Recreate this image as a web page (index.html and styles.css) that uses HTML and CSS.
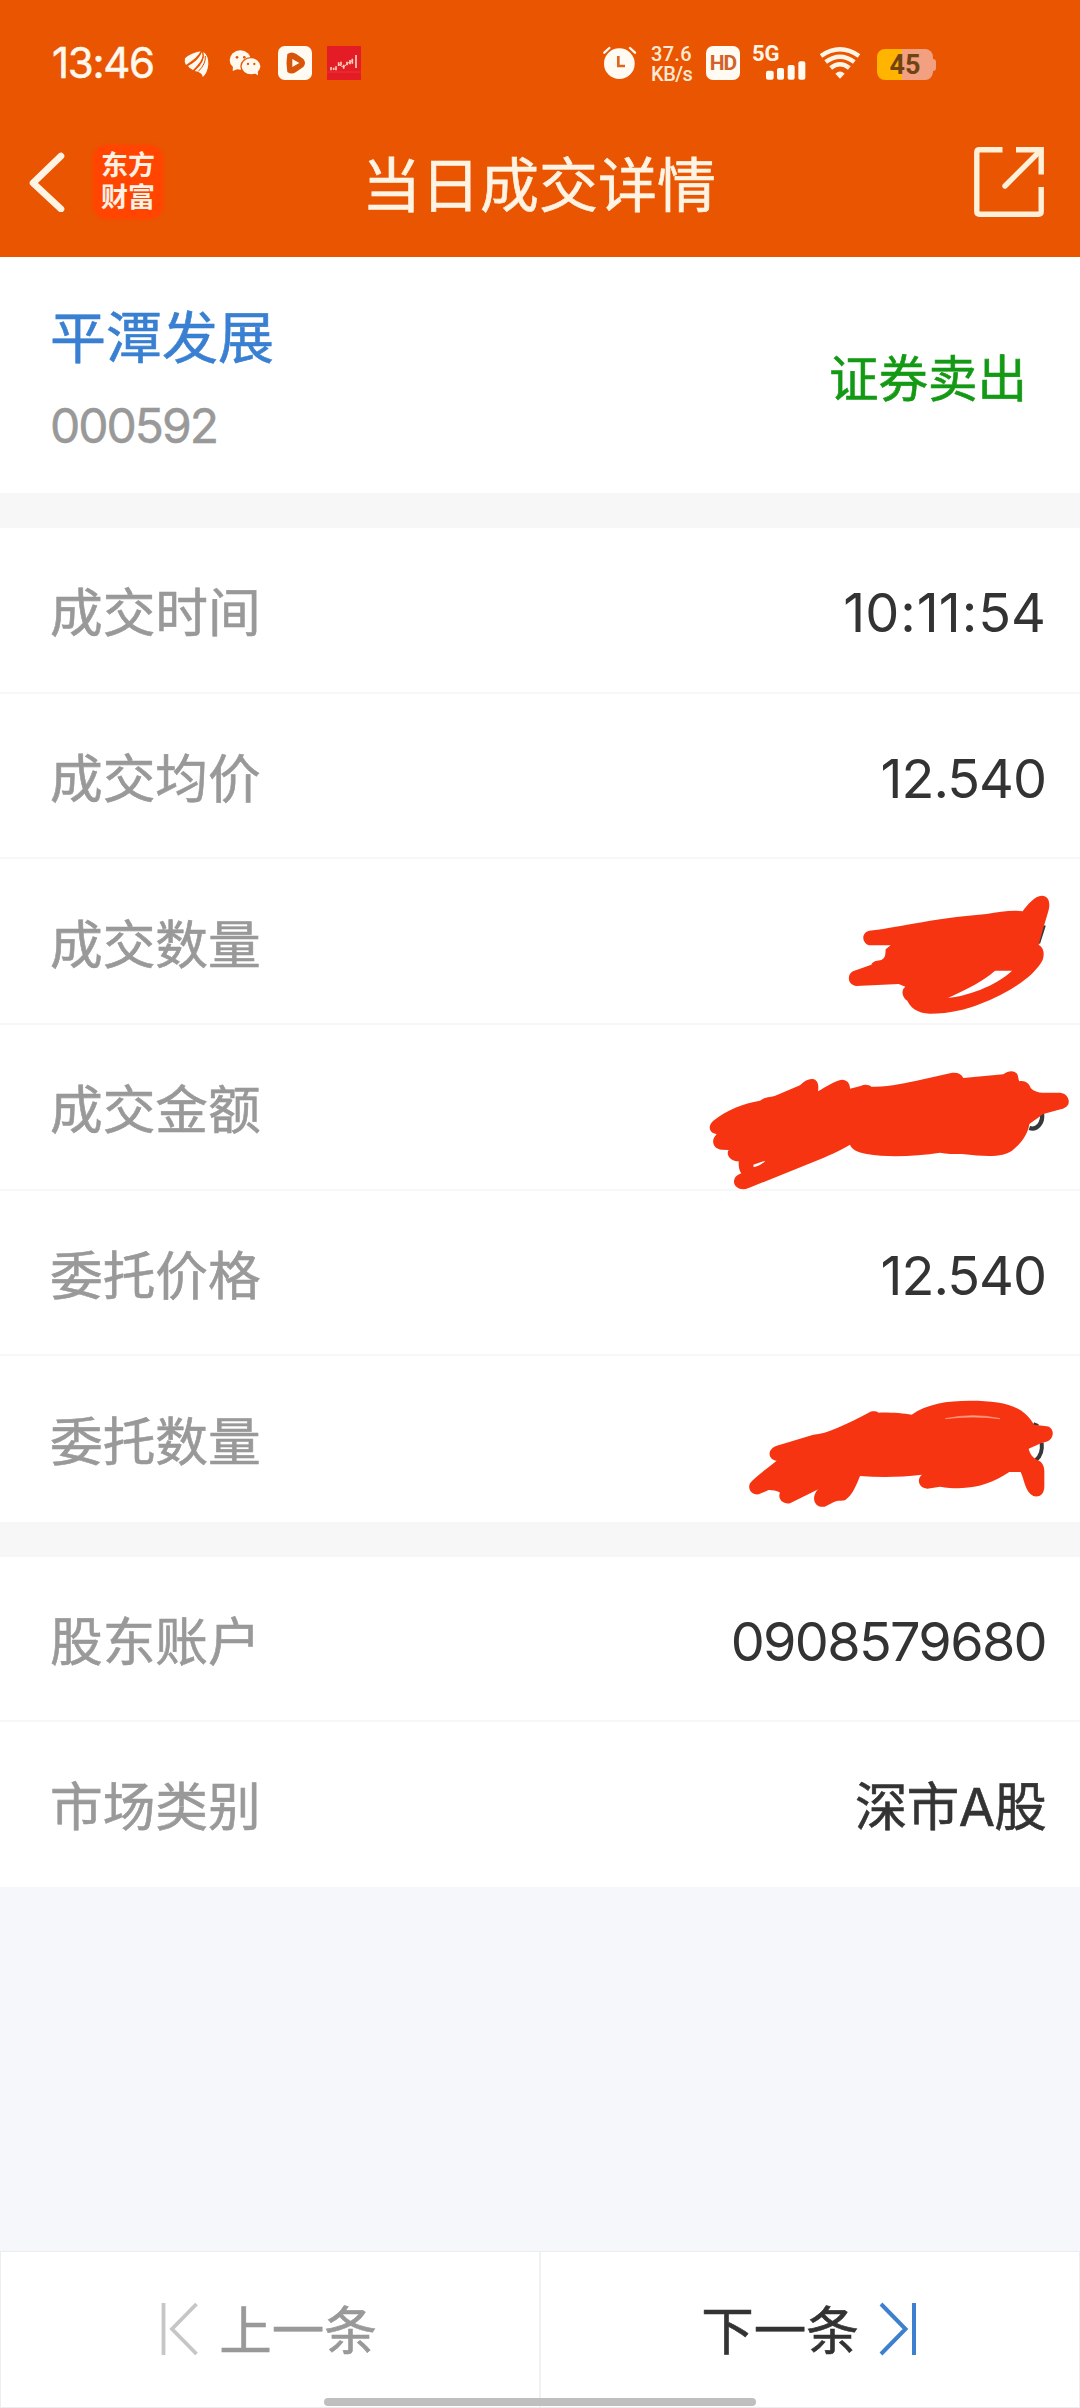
FILE: index.html
```
<!DOCTYPE html>
<html lang="zh-CN">
<head>
<meta charset="utf-8">
<title>当日成交详情</title>
<link rel="stylesheet" href="styles.css">
</head>
<body>
<header class="top">
  <div class="status">
    <div class="status-left">
      <span class="clock">13<i>:</i>46</span>
      <svg class="i-wing" width="26" height="28" viewBox="0 0 78 84" fill="#fff8ee"><path d="M3 25Q22 8 50 4Q42 22 6 45Q0 36 3 25Z"/><path d="M12 48Q44 31 54 5Q66 22 27 60Q16 56 12 48Z"/><path d="M32 63Q66 34 58 5Q74 17 73 42Q71 70 56 81Q55 67 32 63Z"/><path d="M9 46Q45 28 52 5M29 61Q64 32 56 5M43 64Q66 42 64 18" fill="none" stroke="#e95500" stroke-width="3"/></svg>
      <svg class="i-chat" width="32" height="28" viewBox="0 0 96 84"><g fill="#fff8ee"><ellipse cx="34" cy="33" rx="32" ry="29"/><path d="M12 50L11 66L32 58Z"/></g><ellipse cx="66" cy="52" rx="32" ry="28" fill="#e95500"/><g fill="#fff8ee"><ellipse cx="66" cy="52" rx="28" ry="24"/><path d="M72 70L87 79L86 64Z"/></g><g fill="#e95500"><circle cx="24" cy="25" r="4"/><circle cx="46" cy="25" r="4"/><circle cx="57" cy="45" r="3.5"/><circle cx="76" cy="45" r="3.5"/></g></svg>
      <svg class="i-play" width="34" height="34" viewBox="0 0 102 102"><rect width="102" height="102" rx="20" fill="#fffaf2"/><path d="M28 24Q41 15 55 24L76 39Q86 51 76 63L54 78Q41 87 28 78Q23 51 28 24Z" fill="#d85409"/><path d="M43 39L64 51L43 63Z" fill="#fffaf2"/></svg>
      <svg class="i-chart" width="34" height="34" viewBox="0 0 102 102"><rect width="102" height="102" fill="#e41c25"/><path d="M0 78H102" stroke="#f1443d" stroke-width="2"/><path d="M12 63V73M20 65V72M27 61V73M35 49V60M42 47V57M50 56V68M60 47V58M69 42V55M76 38V53M87 27V66" stroke="#ffd0bd" stroke-width="5"/><path d="M35 55L50 64L60 53L76 44" fill="none" stroke="#ffd0bd" stroke-width="3"/></svg>
    </div>
    <div class="status-right">
      <svg class="i-alarm" width="34" height="36" viewBox="0 0 102 108"><circle cx="49" cy="56" r="46" fill="#fffaf2"/><path d="M4 23L19 9M81 9L96 23" stroke="#fffaf2" stroke-width="7" stroke-linecap="round"/><path d="M46 33V63H66" fill="none" stroke="#dc6820" stroke-width="8"/></svg>
      <span class="speed"><b>37.6</b><b>KB/s</b></span>
      <span class="hd">HD</span>
      <span class="signal"><b>5G</b><svg width="40" height="20" viewBox="0 0 120 60" fill="#fffaf2"><rect y="32" width="23" height="27" rx="6"/><rect x="33" y="24" width="21" height="35" rx="6"/><rect x="65" y="15" width="21" height="44" rx="6"/><rect x="97" y="4" width="21" height="55" rx="6"/></svg></span>
      <svg class="i-wifi" width="40" height="32" viewBox="0 0 120 96" fill="none" stroke="#fff4e6" stroke-width="13"><path d="M3 27Q60 -13 117 27"/><path d="M17 45Q60 13 103 45"/><path d="M32 63Q60 40 88 63"/><path d="M46 80Q60 67 74 80L60 95Z" fill="#fff4e6" stroke="none"/></svg>
      <span class="battery"><i class="cell">45</i><i class="cap"></i></span>
    </div>
  </div>
  <nav class="bar">
    <div class="bar-left">
      <svg width="36" height="60" viewBox="0 0 36 60" fill="none" stroke="#fff4e4" stroke-width="6.6" stroke-linecap="round" stroke-linejoin="round"><path d="M32 4L4 31L32 57"/></svg>
      <span class="logo"><span>东方</span><span>财富</span></span>
    </div>
    <h1>当日成交详情</h1>
    <svg class="share" width="70" height="70" viewBox="0 0 70 70" fill="none" stroke="#fff0da" stroke-width="5.4"><path d="M28.5 2.8H5.5Q2.8 2.8 2.8 5.5V64.5Q2.8 67.2 5.5 67.2H64.5Q67.2 67.2 67.2 64.5V40M42 2.8H67.2V27.5"/><path d="M66 4L31 39" stroke-linecap="round"/></svg>
  </nav>
</header>

<section class="stock">
  <div class="stock-id">
    <span class="name">平潭发展</span>
    <span class="code">000592</span>
  </div>
  <span class="side">证券卖出</span>
</section>

<section class="rows deal">
  <div class="row"><span class="label">成交时间</span><span class="value time">10<i>:</i>11<i>:</i>54</span></div>
  <div class="row"><span class="label">成交均价</span><span class="value">12.540</span></div>
  <div class="row"><span class="label">成交数量</span>
    <svg class="scribble s1" viewBox="0 0 900 510"><path d="M793 166L776 220" stroke="#35393c" stroke-width="9"/><path fill-rule="evenodd" d="M268 182C330 178 450 145 620 132C660 125 700 119 728 124C742 104 766 76 786 77C804 78 812 94 806 120L790 174L776 224C792 234 794 250 788 270C762 320 690 366 600 402C560 418 510 431 450 431C410 430 390 410 382 392C366 383 362 360 376 350L356 342L228 348C200 342 202 312 219 304L274 284C280 272 294 272 304 270C318 264 316 250 317 238L332 226H266C244 216 244 188 268 182ZM504 384C560 378 645 350 696 302H645C612 332 560 358 504 384Z" fill="#f63411"/></svg></div>
  <div class="row"><span class="label">成交金额</span>
    <svg class="scribble s2" viewBox="0 0 1170 480"><path d="M1056 190C1060 220 1040 242 1018 234" fill="none" stroke="#35393c" stroke-width="13"/><path fill-rule="evenodd" d="M70 212C110 180 160 160 210 152C222 142 238 142 254 138L330 106C346 90 360 84 372 88C386 94 386 110 384 124C410 108 436 92 456 89C474 90 480 102 480 116L512 108C524 102 536 104 544 110C600 112 640 100 700 88L780 70C800 66 812 70 820 84L940 73C954 62 970 60 980 70C986 78 984 88 988 94C1004 90 1018 100 1022 114C1032 124 1044 128 1058 128H1110C1130 130 1138 146 1136 158C1134 170 1124 174 1112 178L1060 192L1018 222C1014 252 994 280 966 302C940 320 900 322 815 312C790 312 770 312 750 308C680 318 600 324 530 312C500 306 486 298 480 284C450 302 410 320 370 336L176 414C154 424 130 412 132 392C136 376 146 374 154 370C146 360 146 346 146 334C124 334 106 316 116 300L96 299C70 298 64 274 74 260L80 252C60 250 50 230 70 212ZM190 344L226 332C216 344 202 350 191 352Z" fill="#f63411"/></svg></div>
  <div class="row"><span class="label">委托价格</span><span class="value">12.540</span></div>
  <div class="row"><span class="label">委托数量</span>
    <svg class="scribble s3" viewBox="0 0 1080 480"><path d="M940 132L954 138M965 188C968 212 962 228 948 240" fill="none" stroke="#35393c" stroke-width="12"/><path d="M168 198L280 164C320 162 380 132 446 98C456 92 468 93 476 98C510 97 550 100 575 104C620 72 680 62 750 62C850 62 910 76 942 134L974 138C992 138 1000 150 998 164C994 182 980 186 966 188L926 206C930 222 936 230 952 240C968 246 974 260 973 280V320C972 346 956 352 940 348C914 334 914 300 902 276H868C810 314 750 334 660 320L622 326C594 324 590 296 606 284C540 292 480 292 420 288C408 318 398 344 376 360C364 364 354 360 342 366L314 380C286 384 278 360 284 344C288 334 292 328 298 326L210 370C188 374 172 356 180 338C168 330 156 332 146 330L116 343C94 346 82 326 90 310C104 292 138 268 170 242C142 238 142 208 168 198Z" fill="#f63411"/><path d="M676 116Q760 98 840 116Q760 106 676 116Z" fill="#ff9f83" stroke="#ff9f83" stroke-width="2"/></svg></div>
</section>

<section class="rows account">
  <div class="row"><span class="label">股东账户</span><span class="value number">0908579680</span></div>
  <div class="row"><span class="label">市场类别</span><span class="value market">深市A股</span></div>
</section>

<footer class="pager">
  <div class="page prev"><svg width="38" height="54" viewBox="0 0 38 54" fill="none" stroke="#c6c6c6" stroke-width="3.8"><path d="M2.5 1V53M35.5 2L11 27L35.5 52"/></svg><span>上一条</span></div>
  <div class="page next"><span>下一条</span><svg width="38" height="54" viewBox="0 0 38 54" fill="none" stroke="#3c80cf" stroke-width="4"><path d="M35 1V53M2 2L26.5 27L2 52"/></svg></div>
  <i class="home"></i>
</footer>
</body>
</html>
```
FILE: styles.css
```
* { box-sizing: border-box; }
body {
  margin: 0;
  width: 1080px;
  height: 2408px;
  display: flex;
  flex-direction: column;
  overflow: hidden;
  background: #f5f7fa;
  font-family: Inter, "Noto Sans CJK SC", sans-serif;
  color: #333;
}
svg { display: block; flex: none; }
i { font-style: normal; }
h1, .name, .side, .label, .market, .page span { -webkit-text-stroke: .6px currentColor; }

.top { height: 257px; background: #e95500; flex: none; }
.status {
  height: 128px;
  padding: 0 144px 0 52px;
  display: flex;
  justify-content: space-between;
}
.status-left, .status-right { display: flex; align-items: flex-start; }
.clock { width: 103px; font-size: 42px; line-height: 50px; margin-top: 38px; letter-spacing: -1.3px; color: #fff8ee; white-space: nowrap; -webkit-text-stroke: .5px currentColor; }
.i-wing { margin: 50px 0 0 29px; }
.i-chat { margin: 49px 0 0 19px; }
.i-play { margin: 46px 0 0 17px; }
.i-chart { margin: 46px 0 0 15px; }
.i-alarm { margin-top: 45px; }
.speed {
  width: 40px;
  margin: 44px 0 0 14px;
  display: flex;
  flex-direction: column;
  font-family: Roboto, sans-serif;
  font-size: 20px;
  line-height: 20px;
  letter-spacing: -.5px;
  color: #ffe9d3;
}
.speed b { font-weight: 500; white-space: nowrap; }
.speed b:first-child { letter-spacing: .3px; }
.hd {
  width: 34px;
  height: 34px;
  margin: 46px 0 0 15px;
  border-radius: 7px;
  background: #fffaf2;
  color: #d2612a;
  font: 700 21px/34px Roboto, sans-serif;
  letter-spacing: -1px;
  text-align: center;
}
.signal { width: 54px; margin: 44px 0 0 12px; display: flex; flex-direction: column; }
.signal b { font: 700 22px/20px Roboto, sans-serif; color: #fff4e6; }
.signal svg { margin: -4px 0 0 14px; }
.i-wifi { margin: 47px 0 0 14px; }
.battery { display: flex; align-items: center; margin: 49px 0 0 17px; }
.cell {
  width: 56px;
  height: 31px;
  border-radius: 8px;
  background: linear-gradient(90deg, #ffb500 45%, #f2a080 45%);
  color: #714313;
  font: 700 27px/32px Roboto, sans-serif;
  text-align: center;
}
.cap { width: 3px; height: 12px; border-radius: 0 3px 3px 0; background: #f2a080; }

.bar {
  padding: 0 36px 0 29px;
  height: 112px;
  display: grid;
  grid-template-columns: 1fr auto 1fr;
  align-items: center;
}
.bar-left { display: flex; align-items: center; gap: 28px; }
.bar-left svg { margin-top: -4px; }
.logo {
  width: 70px;
  height: 74px;
  padding-top: 5px;
  margin-top: -4px;
  border-radius: 14px;
  background: #ff4500;
  box-shadow: 0 0 3px #ff4500;
  color: #fff0e4;
  font-weight: 700;
  font-size: 27px;
  line-height: 32px;
  text-align: center;
}
.logo span { display: block; }
h1 { margin: 4px 0 0 5px; font-size: 59px; line-height: 70px; font-weight: 400; color: #fff4e4; white-space: nowrap; }
.share { justify-self: end; margin-top: -5px; }

.stock {
  flex: none;
  height: 236px;
  padding: 0 53px 0 50px;
  background: #fff;
  display: flex;
  align-items: center;
  justify-content: space-between;
}
.stock-id { display: flex; flex-direction: column; gap: 18px; padding-top: 3px; }
.name { font-size: 56px; line-height: 80px; color: #397fd2; }
.code { font-size: 48px; line-height: 60px; color: #999; letter-spacing: -2px; -webkit-text-stroke: .5px currentColor; }
.side { padding-top: 7px; font-size: 49.5px; line-height: 60px; color: #149914; }

.rows { flex: none; background: #fff; border-top: 35px solid #f7f7f7; display: flex; flex-direction: column; }
.deal { height: 1029px; }
.account { height: 365px; }
.row {
  flex: 1;
  position: relative;
  display: flex;
  align-items: center;
  justify-content: space-between;
  padding: 5px 34px 0 50px;
  font-size: 52.7px;
  line-height: 70px;
}
.row + .row { box-shadow: 0 -2px 0 #f7f7f7; }
.label { color: #999; }
.value { font-size: 54px; letter-spacing: -1px; }
.time { letter-spacing: 0; }
.time i { padding: 0 1px; }
.number { letter-spacing: -1.7px; }
.market { font-size: 52.5px; letter-spacing: -.7px; }
.scribble { position: absolute; right: 0; }
.s1 { top: 11px; width: 300px; height: 170px; z-index: 1; }
.s2 { top: 25px; width: 390px; height: 160px; z-index: 1; }
.s3 { top: 24px; width: 360px; height: 160px; z-index: 1; }

.pager {
  position: relative;
  margin-top: auto;
  height: 157px;
  display: flex;
  background: #fff;
  border: 1px solid #ebedf0;
}
.page { flex: 1; display: flex; justify-content: center; align-items: center; gap: 20px; font-size: 52.5px; line-height: 70px; }
.page span { margin-top: 3px; }
.page svg { margin-top: -1px; }
.prev { color: #999; border-right: 2px solid #f0f1f3; padding-right: 2px; }
.next { padding-right: 2px; }
.home { position: absolute; left: 323px; bottom: 1px; width: 432px; height: 8px; border-radius: 4px; background: #bfbfbf; }
```
